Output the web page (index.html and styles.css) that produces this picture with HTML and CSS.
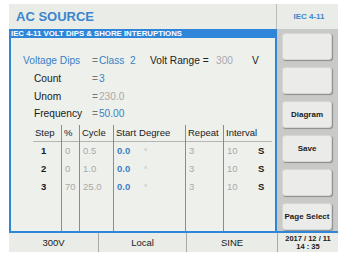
FILE: index.html
```html
<!DOCTYPE html>
<html lang="en">
<head>
    <meta charset="UTF-8">
    <meta name="viewport" content="width=device-width, initial-scale=1.0">
    <title>AC Source</title>
    <link rel="stylesheet" href="styles.css">
</head>
<body>

    <div class="screen">
        <!-- Cabecera -->
        <div class="title">AC SOURCE</div>
        <div class="tab-name">IEC 4-11</div>

        <!-- Panel principal -->
        <div class="main">
            <div class="bar">IEC 4-11 VOLT DIPS &amp; SHORE INTERUPTIONS</div>
            <div class="panel">
                <div class="form">
                    <div class="row first">
                        <span class="label blue wide">Voltage Dips</span>
                        <span class="value wide-val"><span class="eq">=</span><span class="blue">Class&nbsp; 2</span></span>
                        <span class="range">Volt Range =</span>
                        <span class="gray range-val">300</span>
                        <span>V</span>
                    </div>
                    <div class="row">
                        <span class="label">Count</span>
                        <span class="eq">=</span><span class="blue">3</span>
                    </div>
                    <div class="row">
                        <span class="label">Unom</span>
                        <span class="eq">=</span><span class="gray">230.0</span>
                    </div>
                    <div class="row">
                        <span class="label">Frequency</span>
                        <span class="eq">=</span><span class="blue">50.00</span>
                    </div>
                </div>

                <div class="table">
                    <div class="col c-step">
                        <div class="th">Step</div>
                        <div class="td num">1</div>
                        <div class="td num">2</div>
                        <div class="td num">3</div>
                    </div>
                    <div class="col c-pct">
                        <div class="th">%</div>
                        <div class="td gray">0</div>
                        <div class="td gray">0</div>
                        <div class="td gray">70</div>
                    </div>
                    <div class="col c-cycle">
                        <div class="th">Cycle</div>
                        <div class="td gray">0.5</div>
                        <div class="td gray">1.0</div>
                        <div class="td gray">25.0</div>
                    </div>
                    <div class="col c-start">
                        <div class="th">Start<span class="deg-h">Degree</span></div>
                        <div class="td"><span class="blue start">0.0</span><span class="gray deg">°</span></div>
                        <div class="td"><span class="blue start">0.0</span><span class="gray deg">°</span></div>
                        <div class="td"><span class="blue start">0.0</span><span class="gray deg">°</span></div>
                    </div>
                    <div class="col c-repeat">
                        <div class="th">Repeat</div>
                        <div class="td gray">3</div>
                        <div class="td gray">3</div>
                        <div class="td gray">3</div>
                    </div>
                    <div class="col c-interval">
                        <div class="th">Interval</div>
                        <div class="td"><span class="gray ival">10</span><b>S</b></div>
                        <div class="td"><span class="gray ival">10</span><b>S</b></div>
                        <div class="td"><span class="gray ival">10</span><b>S</b></div>
                    </div>
                </div>
            </div>
        </div>

        <!-- Botones laterales -->
        <div class="side">
            <button class="key"></button>
            <button class="key"></button>
            <button class="key">Diagram</button>
            <button class="key">Save</button>
            <button class="key"></button>
            <button class="key">Page Select</button>
        </div>

        <!-- Barra de estado -->
        <div class="status">
            <div class="cell s1">300V</div>
            <div class="cell s2">Local</div>
            <div class="cell s3">SINE</div>
            <div class="cell date">2017 / 12 / 11<br>14 : 35</div>
        </div>
    </div>

</body>
</html>
```

FILE: styles.css
```css
body {
    margin: 4px 12px 9px 9px;
    background: #ffffff;
    font-family: "Liberation Sans", Arial, sans-serif;
    color: #1a1a1a;
}
.screen {
    width: 329px;
    height: 248px;
    display: grid;
    grid-template-columns: 268px 61px;
    grid-template-rows: 25px 202px 21px;
    background: #e9ece7;
}
.title {
    color: #3a86cf;
    font-weight: bold;
    font-size: 13px;
    padding-left: 7px;
    display: flex;
    align-items: center;
    border-right: 1px solid #b9bbb7;
}
.tab-name {
    color: #3a86cf;
    font-weight: bold;
    font-size: 8px;
    display: flex;
    align-items: center;
    justify-content: center;
    padding-left: 3px;
}
.main {
    display: flex;
    flex-direction: column;
}
.bar {
    background: #2f86d9;
    color: white;
    font-weight: bold;
    font-size: 7.8px;
    height: 9px;
    line-height: 9px;
    padding-left: 2px;
    white-space: nowrap;
}
.panel {
    flex: 1;
    background: #eef0ec;
    border-left: 2px solid #2f86d9;
    border-right: 2px solid #2f86d9;
    display: flex;
    flex-direction: column;
    font-size: 9.5px;
}
.form {
    padding-top: 14px;
    padding-left: 12px;
    font-size: 10.2px;
}
.row {
    height: 17.7px;
    display: flex;
    align-items: center;
    white-space: nowrap;
}
.label {
    width: 58px;
    padding-left: 11px;
}
.label.wide {
    width: 69px;
    padding-left: 0;
}
.wide-val {
    width: 58px;
}
.eq {
    color: #777;
    margin-right: 1px;
}
.blue {
    color: #3a80c6;
}
.gray {
    color: #a9a9a9;
}
.range {
    color: #222;
    width: 60px;
}
.range-val {
    margin-left: 6px;
    width: 36px;
}
.table {
    flex: 1;
    display: flex;
    margin-top: 2px;
    margin-left: 22px;
    margin-right: 3px;
}
.col {
    display: flex;
    flex-direction: column;
    border-right: 1px solid #8c8c8c;
}
.col:last-child {
    border-right: none;
    flex: 1;
}
.th {
    height: 16px;
    line-height: 16px;
    border-bottom: 1px solid #b5b5b5;
    white-space: nowrap;
    padding-left: 2px;
}
.td {
    height: 18.3px;
    line-height: 18.3px;
    padding-left: 3px;
    white-space: nowrap;
}
.c-step { width: 28px; }
.c-step .th { padding-left: 2px; }
.c-step .num { padding-left: 8px; font-weight: bold; }
.c-pct { width: 17px; }
.c-cycle { width: 33px; }
.c-start { width: 71px; }
.deg-h { margin-left: 3px; }
.start { font-weight: bold; display: inline-block; width: 27px; }
.deg { font-size: 8px; }
.c-repeat { width: 37px; }
.ival { display: inline-block; width: 31px; }
.side {
    background: #c9cac8;
    display: flex;
    flex-direction: column;
    gap: 7px;
    padding: 4px 6px 0 5px;
}
.key {
    height: 27px;
    width: 50px;
    padding: 0;
    background: #ebebe9;
    border: 1px solid #d6d6d4;
    border-radius: 3px;
    box-shadow: 1px 1px 1px rgba(0, 0, 0, 0.3);
    font-family: "Liberation Sans", Arial, sans-serif;
    font-weight: bold;
    font-size: 8px;
    color: #1a1a1a;
}
.status {
    grid-column: 1 / 3;
    border-top: 2px solid #2f86d9;
    display: flex;
    font-size: 9.5px;
}
.cell {
    display: flex;
    align-items: center;
    justify-content: center;
    border-right: 1px solid #a9aaa8;
}
.s1 { width: 89px; }
.s2 { width: 87px; }
.s3 { width: 90px; }
.date {
    flex: 1;
    border-right: none;
    font-weight: bold;
    font-size: 7.5px;
    line-height: 8px;
    text-align: center;
}
```
